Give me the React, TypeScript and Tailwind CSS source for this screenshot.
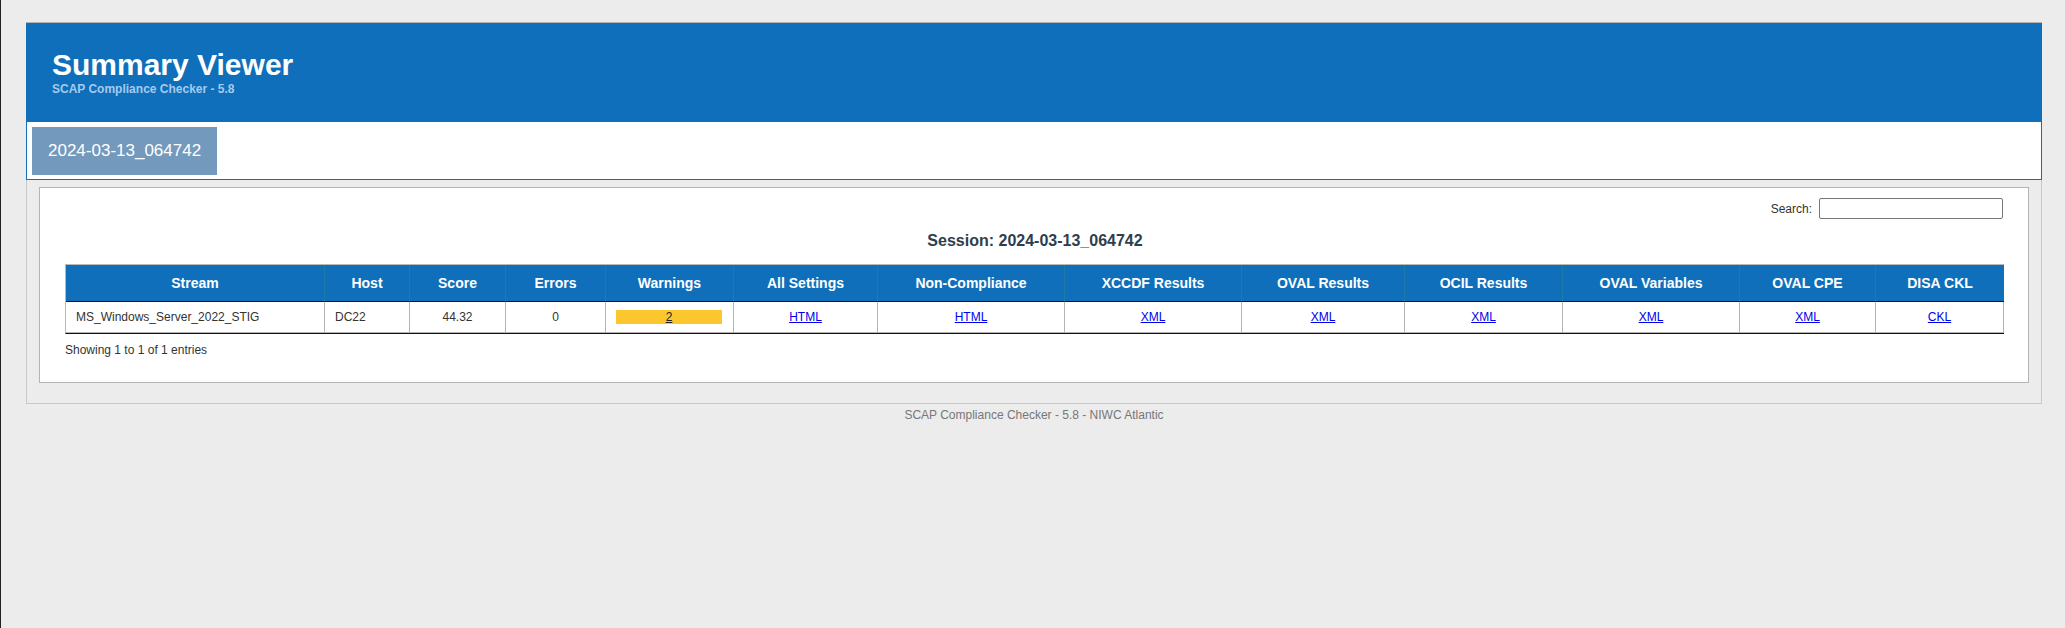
const columns = [
  { header: "Stream", width: 259 },
  { header: "Host", width: 85 },
  { header: "Score", width: 96 },
  { header: "Errors", width: 100 },
  { header: "Warnings", width: 128 },
  { header: "All Settings", width: 144 },
  { header: "Non-Compliance", width: 187 },
  { header: "XCCDF Results", width: 177 },
  { header: "OVAL Results", width: 163 },
  { header: "OCIL Results", width: 158 },
  { header: "OVAL Variables", width: 177 },
  { header: "OVAL CPE", width: 136 },
  { header: "DISA CKL", width: 128 },
]

// link columns, in order after "Warnings"
const links = ["HTML", "HTML", "XML", "XML", "XML", "XML", "XML", "CKL"]

const SessionTable = () => (
  <div className="w-[1939px] border-t border-l border-b border-t-[#b9b9b9] border-l-[#b9b9b9] border-b-[#111]">
    <table className="w-[1938px] table-fixed border-separate border-spacing-0">
      <colgroup>
        {columns.map((c) => (
          <col key={c.header} style={{ width: c.width }} />
        ))}
      </colgroup>
      <thead>
        <tr className="bg-[#106fba]">
          {columns.map((c, i) => (
            <th
              key={c.header}
              className={`py-[10px] text-center text-[14px] font-bold leading-[16px] text-white border-b border-b-[#111] ${
                i < columns.length - 1 ? "border-r border-r-[#1f7aa6]" : ""
              }`}
            >
              {c.header}
            </th>
          ))}
        </tr>
      </thead>
      <tbody>
        <tr className="bg-white text-[12px] leading-[14px] text-[#333]">
          <td className="border-r border-b border-[#b4b4b4] py-[8px] pl-[10px] text-left">MS_Windows_Server_2022_STIG</td>
          <td className="border-r border-b border-[#b4b4b4] py-[8px] pl-[10px] text-left">DC22</td>
          <td className="border-r border-b border-[#b4b4b4] py-[8px] text-center">44.32</td>
          <td className="border-r border-b border-[#b4b4b4] py-[8px] text-center">0</td>
          <td className="border-r border-b border-[#b4b4b4] py-[8px] pl-[10px] pr-[11px]">
            <div className="bg-[#fcc62e] text-center text-[#222] underline">2</div>
          </td>
          {links.map((l, i) => (
            <td key={i} className="border-r border-b border-[#b4b4b4] py-[8px] text-center">
              <a href="#" className="text-[#0000ee] underline">{l}</a>
            </td>
          ))}
        </tr>
      </tbody>
    </table>
  </div>
)

export default function App() {
  return (
    <div className="min-h-[628px] w-full border-l border-[#222] bg-[#ececec] pt-[22px] font-['Liberation_Sans',Arial,sans-serif]">
      <div className="ml-[25px] w-[2016px]">
        {/* HEADER */}
        <div className="h-[100px] border-t border-[#b4b4b4] bg-[#106fba] pl-[26px] pt-[27px]">
          <h1 className="text-[30px] font-bold leading-[30px] text-white">Summary Viewer</h1>
          <p className="mt-[2px] text-[12px] font-bold leading-[14px] text-[#a4cbef]">SCAP Compliance Checker - 5.8</p>
        </div>

        {/* TABS */}
        <div className="h-[58px] border-x border-b border-[#106fba] bg-white pl-[5px] pt-[5px]">
          <button className="flex h-[48px] items-center bg-[#7399bd] px-[16px] text-[17px] text-white">
            2024-03-13_064742
          </button>
        </div>

        {/* SESSION */}
        <div className="border-x border-b border-[#c8c8c8] px-[12px] pt-[7px] pb-[20px]">
          <div className="border border-[#b4b4b4] bg-white pt-[10px] pb-[25px] pl-[25px] pr-[23px]">
            <div className="flex h-[21px] items-center justify-end gap-[7px] pr-[2px] text-[12px] text-[#333]">
              <label>Search:</label>
              <input type="search" className="h-[21px] w-[184px] rounded-[2px] border border-[#767676] bg-white" />
            </div>
            <h2 className="mt-[12px] text-center text-[16px] font-bold leading-[20px] text-[#2f3e4e]">
              Session: 2024-03-13_064742
            </h2>
            <div className="mt-[13px]">
              <SessionTable />
            </div>
            <div className="mt-[9px] text-[12px] leading-[14px] text-[#333]">Showing 1 to 1 of 1 entries</div>
          </div>
        </div>

        {/* FOOTER */}
        <div className="pt-[4px] text-center text-[12px] leading-[14px] text-[#777]">
          SCAP Compliance Checker - 5.8 - NIWC Atlantic
        </div>
      </div>
    </div>
  )
}
